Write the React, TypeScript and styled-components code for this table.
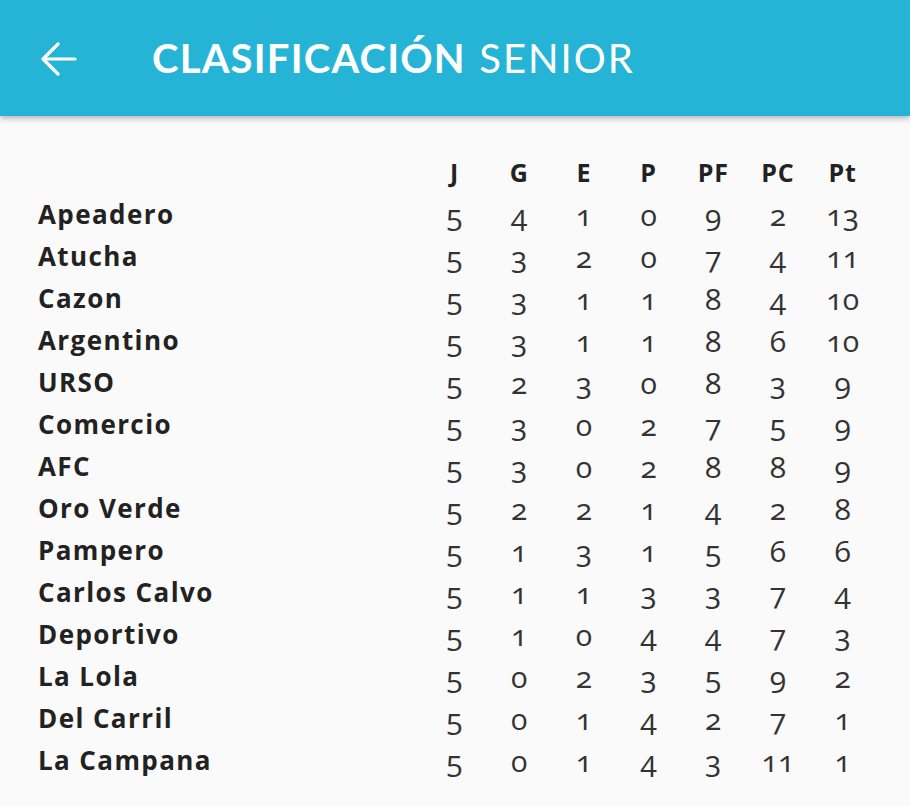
import React from "react";
import styled, { createGlobalStyle } from "styled-components";

const Global = createGlobalStyle`
  html, body { margin: 0; padding: 0; background: #fafafa; }
  body { font-family: "Open Sans", sans-serif; }
`;

const Page = styled.div`
  width: 910px;
  height: 806px;
  background: #fafafa;
  overflow: hidden;
`;

const AppBar = styled.header`
  height: 116px;
  background: #26b4d6;
  box-shadow: 0 2px 6px rgba(0, 0, 0, 0.3);
  display: flex;
  align-items: center;
  padding-left: 40px;
  color: #fff;
  position: relative;
  z-index: 1;
`;

const BackButton = styled.button`
  border: 0;
  background: none;
  padding: 0;
  width: 38px;
  height: 38px;
  color: #fff;
  display: flex;
  align-items: center;
  justify-content: center;
  margin-top: 2px;
`;

const Title = styled.h1`
  margin: 0 0 0 74px;
  font-family: Lato, sans-serif;
  font-size: 40px;
  font-weight: 400;
  letter-spacing: 1.2px;
  line-height: 1;
  word-spacing: 2px;
`;

const Strong = styled.span`
  font-weight: 700;
`;

const Light = styled.span`
  letter-spacing: 2px;
`;

const Table = styled.div`
  display: grid;
  grid-template-columns: 1fr repeat(7, 64.7px);
  grid-auto-rows: 42px;
  padding: 35px 35px 0 38px;
  color: #222;
`;

const HeadCell = styled.div<{ $first?: boolean }>`
  font-family: "Open Sans", sans-serif;
  font-weight: 700;
  font-size: 25px;
  letter-spacing: 0.8px;
  display: flex;
  align-items: center;
  justify-content: ${(p) => (p.$first ? "flex-start" : "center")};
`;

const NameCell = styled.div`
  font-family: "Open Sans", sans-serif;
  font-weight: 700;
  font-size: 26px;
  letter-spacing: 1.4px;
  display: flex;
  align-items: center;
  color: #222;
`;

const NumCell = styled.div`
  font-family: "Open Sans", sans-serif;
  font-weight: 400;
  font-size: 30px;
  font-variant-numeric: oldstyle-nums;
  font-feature-settings: "onum" 1;
  display: flex;
  align-items: center;
  justify-content: center;
  color: #333;
`;

const rows: [string, number[]][] = [
  ["Apeadero", [5, 4, 1, 0, 9, 2, 13]],
  ["Atucha", [5, 3, 2, 0, 7, 4, 11]],
  ["Cazon", [5, 3, 1, 1, 8, 4, 10]],
  ["Argentino", [5, 3, 1, 1, 8, 6, 10]],
  ["URSO", [5, 2, 3, 0, 8, 3, 9]],
  ["Comercio", [5, 3, 0, 2, 7, 5, 9]],
  ["AFC", [5, 3, 0, 2, 8, 8, 9]],
  ["Oro Verde", [5, 2, 2, 1, 4, 2, 8]],
  ["Pampero", [5, 1, 3, 1, 5, 6, 6]],
  ["Carlos Calvo", [5, 1, 1, 3, 3, 7, 4]],
  ["Deportivo", [5, 1, 0, 4, 4, 7, 3]],
  ["La Lola", [5, 0, 2, 3, 5, 9, 2]],
  ["Del Carril", [5, 0, 1, 4, 2, 7, 1]],
  ["La Campana", [5, 0, 1, 4, 3, 11, 1]],
];

const heads = ["J", "G", "E", "P", "PF", "PC", "Pt"];

export default function App() {
  return (
    <Page>
      <Global />
      <AppBar>
        <BackButton aria-label="Volver">
          <svg width="36" height="34" viewBox="0 0 36 34" fill="none" stroke="#fff" strokeWidth="3.2" strokeLinecap="round" strokeLinejoin="round">
            <path d="M34 17H3" />
            <path d="M17 2L2 17l15 15" />
          </svg>
        </BackButton>
        <Title>
          <Strong>CLASIFICACIÓN</Strong> <Light>SENIOR</Light>
        </Title>
      </AppBar>
      <Table>
        <HeadCell $first />
        {heads.map((h) => (
          <HeadCell key={h}>{h}</HeadCell>
        ))}
        {rows.map(([name, nums]) => (
          <React.Fragment key={name}>
            <NameCell>{name}</NameCell>
            {nums.map((n, i) => (
              <NumCell key={i}>{n}</NumCell>
            ))}
          </React.Fragment>
        ))}
      </Table>
    </Page>
  );
}
